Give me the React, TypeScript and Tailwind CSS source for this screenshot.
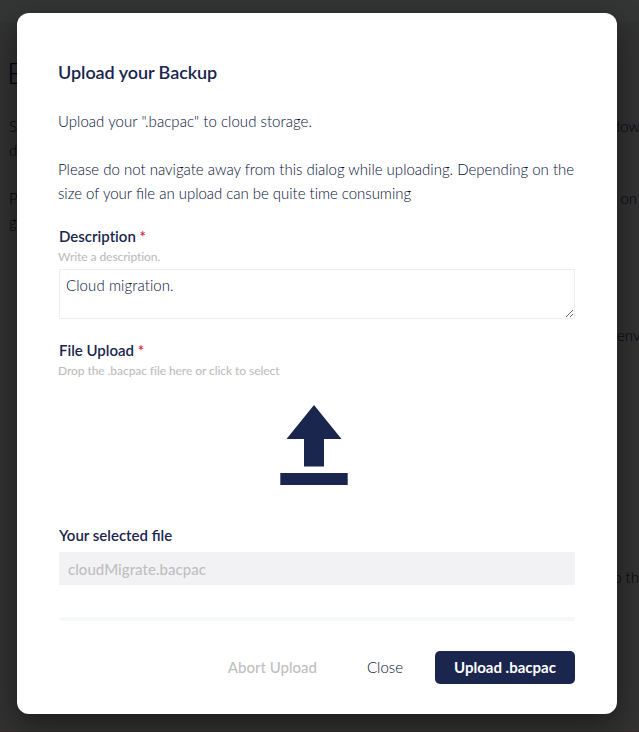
import React from "react";

function Backdrop() {
  return (
    <div className="h-[732px] w-[639px] overflow-hidden bg-[#323232] text-[15px] leading-6 font-light text-[#020310]">
      <div className="h-[22px] bg-[#333635]" />
      <div className="px-[9px]">
        <div className="-ml-[2px] pt-[32px] text-[30px] leading-[36px]">B</div>
        <div className="mt-[24px] flex justify-between whitespace-nowrap">
          <span>S</span>
          <span className="-mr-[10px]">dow</span>
        </div>
        <div>d</div>
        <div className="mt-[24px] flex justify-between whitespace-nowrap">
          <span>P</span>
          <span className="-mr-[7px]">on</span>
        </div>
        <div>g</div>
        <div className="mt-[89px] flex justify-end">
          <span className="-mr-[9px] w-[22px]">env</span>
        </div>
        <div className="mt-[218px] flex justify-end whitespace-nowrap">
          <span className="-mr-[9px]">to th</span>
        </div>
      </div>
      <div className="mt-[142px] h-px bg-[#342629]" />
    </div>
  );
}

function FieldLabel({ text, hint }: { text: string; hint: string }) {
  return (
    <div>
      <div className="-mt-px h-[21px] text-[15px] leading-[20px] font-semibold">
        {text} <span className="text-[#dc1848]">*</span>
      </div>
      <div className="-ml-px h-[20px] text-[12px] leading-[20px] font-medium tracking-[-0.07px] text-[#bdbdbd]">
        {hint}
      </div>
    </div>
  );
}

function UploadIcon() {
  return (
    <svg width="68" height="81" viewBox="0 0 68 81" fill="#1a264e">
      <path d="M34 0 61.5 34H44V61.5H24V34H6.5Z" />
      <path d="M.3 68H67.7V80H.3Z" />
    </svg>
  );
}

export default function App() {
  return (
    <main className="relative h-[732px] w-[639px] overflow-hidden font-['Lato',sans-serif] [font-variant-ligatures:none]">
      <Backdrop />
      <section
        role="dialog"
        aria-label="Upload your Backup"
        className="absolute top-[13px] left-[17px] flex h-[701px] w-[600px] flex-col rounded-[12px] bg-white px-[42px] pt-[46px] text-[#1a264e] shadow-[0_10px_30px_rgba(0,0,0,0.45)]"
      >
        <h1 className="-ml-px h-[26px] text-[18px] leading-[26px] font-semibold tracking-[-0.06px]">
          Upload your Backup
        </h1>
        <div className="mt-[24px] -ml-px text-[15px] leading-6 font-light whitespace-nowrap text-[#050f38]">
          <p className="tracking-[0.04px]">Upload your ".bacpac" to cloud storage.</p>
          <p className="mt-6">
            Please do not navigate away from this dialog while uploading. Depending on the
            <br />
            size of your <span className="[font-variant-ligatures:normal]">file</span>
            <span className="tracking-[-0.03px]"> an upload can be quite time consuming</span>
          </p>
        </div>
        <div className="mt-[22px]">
          <FieldLabel text="Description" hint="Write a description." />
          <textarea
            defaultValue="Cloud migration."
            className="mt-[2px] block h-[50px] w-full resize-y border border-[#e9edf8] px-[6px] py-[3px] text-[15px] leading-6 font-light tracking-[0.08px] text-[#050f38] outline-none"
          />
        </div>
        <div className="mt-[22px]">
          <FieldLabel text="File Upload" hint="Drop the .bacpac file here or click to select" />
          <div className="mt-[24px] flex justify-center pr-[6px]">
            <UploadIcon />
          </div>
        </div>
        <div className="mt-[39px] h-[20px] text-[15px] leading-[20px] font-semibold [font-variant-ligatures:normal]">
          Your selected file
        </div>
        <div className="mt-[7px] h-[33px] bg-[#f2f2f4] px-[9px] text-[15px] leading-[34px] font-medium tracking-[0.04px] text-[#bfbfbf]">
          cloudMigrate.bacpac
        </div>
        <div className="mt-[32px] h-[4px] rounded-[2px] bg-[#f6f7fb]" />
        <div className="mt-[30px] flex h-[33px] items-center justify-end text-[15px]">
          <button className="font-medium text-[#bfbfbf]">Abort Upload</button>
          <button className="ml-[50px] font-light text-[#050f38]">Close</button>
          <button className="ml-[32px] h-[33px] w-[140px] rounded-[5px] bg-[#1a264e] font-bold text-white">
            Upload .bacpac
          </button>
        </div>
      </section>
    </main>
  );
}
